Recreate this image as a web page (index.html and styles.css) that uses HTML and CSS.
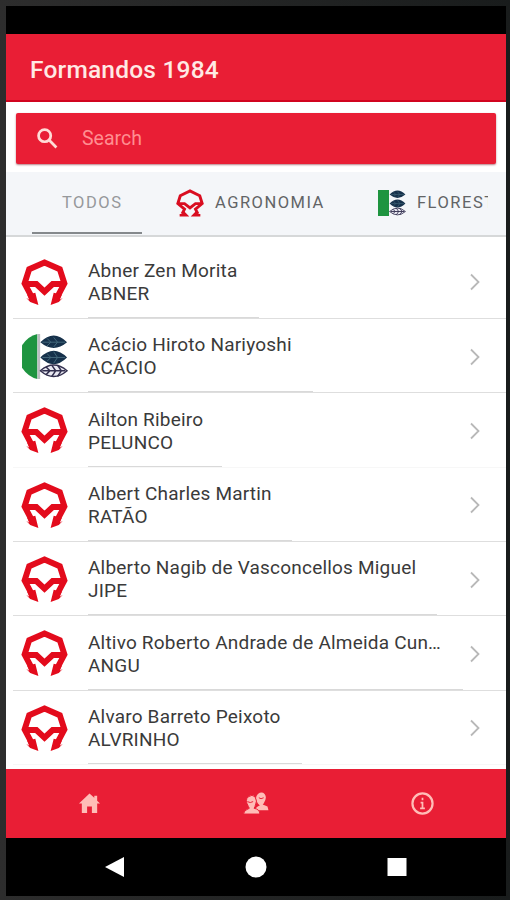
FILE: index.html
```html
<!DOCTYPE html>
<html lang="pt-BR">
  <head>
    <meta charset="UTF-8" />
    <title>Formandos 1984</title>
    <meta name="viewport" content="width=device-width, initial-scale=1.0" />
    <link rel="stylesheet" href="styles.css">
  </head>
  <body>
    <!-- shared logos -->
    <svg class="sprites">
      <symbol id="agro-small" viewBox="0 0 46 46">
        <path d="M6 43H17L12 38M40 43H29L34 38" fill="none" stroke="#d90d20" stroke-width="4" />
        <path d="M10 41 14 33 3 24 7 11 23 3 39 11 43 24 32 33 36 41M3 24H14L23 31L32 24H43" fill="none" stroke="#d90d20" stroke-width="4.8" />
      </symbol>
      <symbol id="agro" viewBox="0 0 46 46">
        <path d="M12 40 3.500 24 8 10 23 3.500 38 10 42.500 24 34 40M3 24.500H15L23 32L31 24.500H43" fill="none" stroke="#e30b1c" stroke-width="5.8" />
        <path d="M5 38 8 40 6 35 14 33 17 45 9 42ZM41 38 38 40 40 35 32 33 29 45 37 42Z" fill="#e30b1c" />
      </symbol>
      <symbol id="leaves" viewBox="0 0 30 46">
        <path d="M1 8Q15-6 29 8Q15 20 1 8ZM1 24Q15 10 29 24Q15 38 1 24Z" fill="#16314b" />
        <path d="M3 8H27M8 4 12 8 8 12M15 3 19 8 15 13M3 24H27M8 20 12 24 8 28M15 18 19 24 15 30" fill="none" stroke="#44697c" />
        <path d="M1 38Q15 26 29 38Q15 50 1 38Z" fill="#e9e9f2" stroke="#33304f" stroke-width="1.5" />
        <path d="M3 38H27M7 34 11 38 7 42M13 32 17 38 13 44M19 32 23 38 19 44" fill="none" stroke="#33304f" stroke-width="1.6" />
      </symbol>
    </svg>

    <div class="phone">
      <header class="header">
        <h1>Formandos 1984</h1>
      </header>

      <div class="search-wrap">
        <div class="search">
          <svg class="search-icon" viewBox="0 0 20 20"><circle cx="7.3" cy="7.3" r="5.8" /><path d="M11.500 11.500 18.500 18.500" /></svg>
          <span>Search</span>
        </div>
      </div>

      <nav class="tabs">
        <a class="tab todos active">TODOS</a>
        <a class="tab agronomia"><svg class="tab-logo"><use href="#agro-small" /></svg><span>AGRONOMIA</span></a>
        <a class="tab florestal">
          <svg class="tab-logo" viewBox="0 0 28 28"><path d="M0 1H11V27H0Z" fill="#1e9440" /><use href="#leaves" x="11" y="0" width="17" height="28" /></svg>
          <span class="cut">FLORESTAL</span>
        </a>
      </nav>

      <main class="list" id="list"></main>

      <nav class="bottom">
        <a><svg class="icon" viewBox="0 0 24 24"><path d="M12 1.500 1 12H4V22H9.500V15H14.500V22H20V12H23L20 9V4H17V6Z" /></svg></a>
        <a>
          <svg class="icon people" viewBox="0 0 26 24">
            <path d="M12 19Q13 15 17 14L15 12Q11 6 15 2Q19-1 22 2Q25 6 21 12L20 13L25 15L26 19Z" />
            <path class="front" d="M0 23Q0 19 6 17L5 15Q1 8 5 5Q9 2 12 5Q15 9 12 15L11 17Q17 18 17 23Z" />
            <path class="hair" d="M4 10Q7 12 10 10M16 6Q18 8 21 6" />
          </svg>
        </a>
        <a><svg class="icon info" viewBox="0 0 24 24"><circle cx="12" cy="12" r="10.500" /><path class="letter" d="M12 6V8.500M10 11H12V17M9.500 17.200H14.500" /></svg></a>
      </nav>

      <div class="system">
        <svg viewBox="0 0 22 22"><path d="M1 11 20 1V21Z" /></svg>
        <svg viewBox="0 0 22 22"><circle cx="11" cy="11" r="10.500" /></svg>
        <svg viewBox="0 0 22 22"><path d="M1.500 2H20.500V20H1.500Z" /></svg>
      </div>
    </div>

    <script>
      const people = [
        { name: "Abner Zen Morita", nick: "ABNER", line: 171 },
        { name: "Acácio Hiroto Nariyoshi", nick: "ACÁCIO", line: 225, florestal: true },
        { name: "Ailton Ribeiro", nick: "PELUNCO", line: 134 },
        { name: "Albert Charles Martin", nick: "RATÃO", line: 204 },
        { name: "Alberto Nagib de Vasconcellos Miguel", nick: "JIPE", line: 349 },
        { name: "Altivo Roberto Andrade de Almeida Cun…", nick: "ANGU", line: 375 },
        { name: "Alvaro Barreto Peixoto", nick: "ALVRINHO", line: 214 },
      ];

      const agroLogo = `<svg class="logo"><use href="#agro" /></svg>`;
      const florestalLogo = `
        <svg class="logo" viewBox="0 0 46 46">
          <path d="M16 1Q7 3 1 12V34Q7 43 16 45Z" fill="#1e9440" />
          <path d="M17.500 1V45" stroke="#bcbcc2" stroke-width="2.500" />
          <use href="#leaves" x="18" y="0" width="28" height="46" />
        </svg>`;

      document.getElementById("list").innerHTML = people
        .map(
          (p) => `
          <div class="item">
            ${p.florestal ? florestalLogo : agroLogo}
            <div class="text">
              <p class="name">${p.name}</p>
              <p>${p.nick}</p>
              <div class="line" style="width: ${p.line}px"></div>
            </div>
            <svg class="chevron" viewBox="0 0 12 18"><path d="M2 1.500 9.500 9 2 16.500" /></svg>
          </div>`
        )
        .join("");
    </script>
  </body>
</html>
```
FILE: styles.css
```css
body {
  font-family: Roboto, sans-serif;
  background: linear-gradient(to right, #2d2d2d, #191c1c);
  margin: 0;
  height: 900px;
  overflow: hidden;
}

.sprites {
  display: none;
}

.phone {
  width: 500px;
  height: 890px;
  margin: 6px 3px 0 6px;
  padding-top: 28px;
  box-sizing: border-box;
  background-color: #000;
  display: flow-root;
}

.header {
  height: 68px;
  box-sizing: border-box;
  padding: 0 24px;
  display: flex;
  align-items: center;
  background-color: #e91e35;
  border-bottom: 2px solid #d1041f;
}

h1 {
  margin: 4px 0 0;
  font-size: 24.5px;
  font-weight: 500;
  letter-spacing: 0.2px;
  color: #ffe9e4;
}

.search-wrap {
  height: 70px;
  box-sizing: border-box;
  padding: 11px 10px 8px;
  background-color: #fff;
}

.search {
  height: 51px;
  display: flex;
  align-items: center;
  gap: 24px;
  padding-left: 21px;
  border-radius: 2px;
  background-color: #e91e35;
  box-shadow: 0 1px 2px rgba(110, 0, 15, 0.5);
  color: #ff8e91;
  font-size: 19.5px;
}

.search-icon {
  width: 21px;
  height: 21px;
  fill: none;
  stroke: #ffdcd7;
  stroke-width: 2.6;
}

.tabs {
  height: 65px;
  display: flex;
  background-color: #f4f6f9;
  border-bottom: 2px solid #d6d8d9;
  box-sizing: border-box;
  color: #626466;
  font-size: 16.5px;
  letter-spacing: 1.5px;
}

.tab {
  display: flex;
  align-items: center;
  box-sizing: border-box;
  height: 62px;
}

.tab span {
  margin-top: -2px;
}

.todos {
  width: 110px;
  margin-left: 26px;
  padding-left: 30px;
  border-bottom: 2px solid #85898c;
  color: #96989b;
}

.agronomia {
  margin-left: 34px;
  width: 202px;
}

.tab-logo {
  width: 28px;
  height: 28px;
  margin-right: 11px;
  flex-shrink: 0;
}

.cut {
  width: 71px;
  overflow: hidden;
}

.list {
  height: 532px;
  box-sizing: border-box;
  padding: 7.6px 0 0 7px;
  background-color: #fff;
  overflow: hidden;
}

.item {
  height: 74.35px;
  box-sizing: border-box;
  display: flex;
  align-items: center;
  padding: 2px 25px 0 8px;
  border-bottom: 1px solid #dedede;
}

.item:nth-child(3),
.item:last-child {
  border-bottom-color: #f7f7f7;
}

.logo {
  width: 47px;
  height: 47px;
  margin-right: 20px;
}

.text {
  flex: 1;
  align-self: flex-end;
  height: 59px;
}

.text p {
  margin: 0;
  font-size: 19px;
  line-height: 23px;
  letter-spacing: 0.2px;
  color: #3a3a3a;
}

.text .name {
  white-space: nowrap;
}

.line {
  height: 1px;
  margin-top: 12px;
  background-color: #d9d9d9;
}

.chevron {
  width: 12px;
  height: 18px;
  fill: none;
  stroke: #b8b8b8;
  stroke-width: 1.8;
}

.bottom {
  height: 69px;
  display: grid;
  grid-template-columns: repeat(3, 1fr);
  place-items: center;
  background-color: #e91e35;
}

.icon {
  display: block;
  width: 23px;
  height: 23px;
  fill: #ffbdb7;
}

.people {
  width: 26px;
}

.front {
  stroke: #e91e35;
  stroke-width: 1;
}

.hair {
  fill: none;
  stroke: #e91e35;
}

.info {
  fill: none;
  stroke: #ffbdb7;
  stroke-width: 2.3;
}

.letter {
  stroke-width: 1.8;
}

.system {
  height: 58px;
  display: flex;
  align-items: center;
  justify-content: center;
  gap: 119px;
}

.system svg {
  width: 22px;
  height: 22px;
  fill: #fff;
}
```
